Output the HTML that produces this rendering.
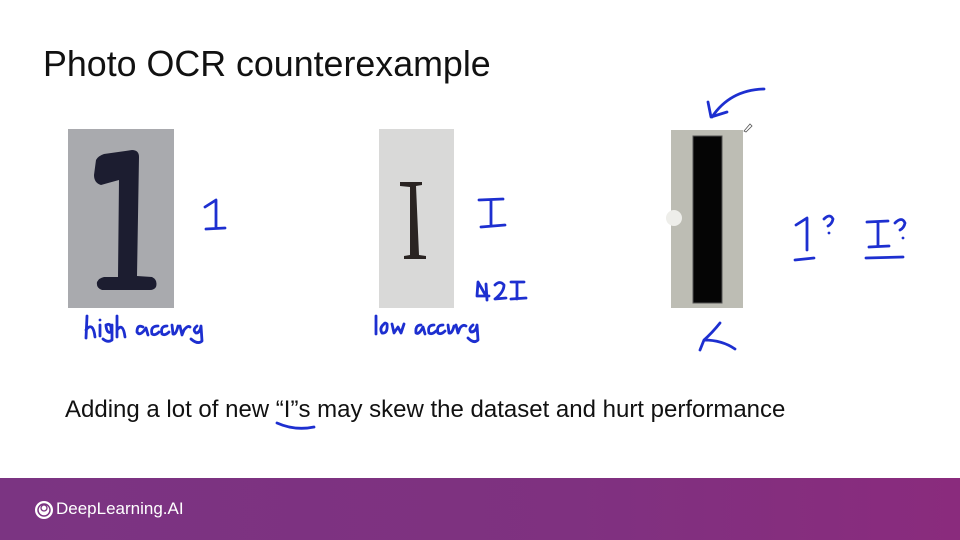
<!DOCTYPE html>
<html><head><meta charset="utf-8"><style>
body{margin:0;width:960px;height:540px;background:#fff;position:relative;overflow:hidden;font-family:"Liberation Sans",sans-serif}
.t{position:absolute;left:43px;top:44px;font-size:35.8px;color:#111}
.s{position:absolute;left:65px;top:396px;font-size:24px;color:#111}
.f{position:absolute;left:0;top:478px;width:960px;height:62px;background:linear-gradient(90deg,#7b3482,#7f3180 60%,#8a2b7d)}
.logo{position:absolute;left:56px;top:499px;color:#fff;font-size:17px}
</style></head><body>
<div class="t">Photo OCR counterexample</div>
<svg width="960" height="540" style="position:absolute;left:0;top:0">
<rect x="68" y="129" width="106" height="179" fill="#a9aaae"/>
<path d="M96 160 Q98 156 104 154 L132 150 Q139 150 139 157 L137 276 L152 277 Q158 280 156 287 Q154 290 150 290 L102 290 Q96 288 97 282 Q99 278 104 277 L118 277 L119 180 Q108 183 101 185 Q94 183 94 175Z" fill="#1c1d30"/>
<rect x="379" y="129" width="75" height="179" fill="#d9d9d8"/>
<path d="M400 182 L422 182 L422 185 L416 186 L419 255 L426 256 L426 259 L404 259 L404 256 L410 255 L410 187 L400 186Z" fill="#2a2422"/>
<rect x="671" y="130" width="72" height="178" fill="#bdbdb4"/>
<rect x="693" y="136" width="29" height="167" fill="#050505" stroke="#555" stroke-width="1"/>
<g fill="none" stroke="#1d2fd0" stroke-width="2.8" stroke-linecap="round" stroke-linejoin="round">
<path d="M205 207 L216 200 L216 228 M206 229 L225 228"/>
<path d="M479 200 L503 199 M491 200 L491 226 M481 227 L505 225"/>
<path d="M486 296 L478 282 L477 296 L489 296 M486 284 L487 300 M495 285 Q500 280 504 285 Q504 292 495 299 L506 298 M511 282 L524 282 M517 282 L517 299 M511 299 L526 298"/>
<path d="M87 316 L86 338 M86 330 Q93 321 95 337 M100 325 L100 336 M100 320 L100 320 M106 325 Q112 322 111 332 Q107 334 106 326 M112 325 L112 340 Q108 343 103 339 M117 316 L117 337 M117 330 Q123 322 125 337 M143 327 Q137 324 137 332 Q140 337 146 328 L148 335 M158 326 Q150 326 152 334 Q155 336 159 332 M167 326 Q160 326 162 334 Q165 336 169 332 M172 325 L173 334 Q176 335 178 326 M180 326 L182 335 L184 330 Q188 325 190 327 M197 326 Q192 330 196 333 Q200 333 201 326 L202 341 Q198 345 191 339"/>
<path d="M376 316 L376 334 M384 324 Q379 328 382 333 Q388 334 387 324 Q385 322 384 324 M392 324 L394 333 L398 327 L401 333 L404 324 M421 325 Q415 325 416 333 Q419 335 423 327 L425 334 M434 325 Q427 325 429 333 Q432 335 436 331 M443 325 Q436 325 438 333 Q441 335 445 331 M448 325 L449 333 Q452 334 454 326 M456 325 L458 333 L460 328 Q463 324 466 326 M473 325 Q468 329 471 332 Q476 332 477 325 L478 340 Q474 344 468 338"/>
<path d="M764 89 Q730 90 712 117 M708 102 L711 117 L727 112"/>
<path d="M735 349 Q722 340 704 340 Q712 333 720 323 M704 340 L700 350"/>
<path d="M796 225 L807 218 L807 250 M795 260 L814 258 M824 219 Q830 213 833 219 Q832 224 828 226 M829 233 L829 233"/>
<path d="M867 222 L888 221 M878 222 L878 246 M869 247 L889 246 M866 258 L903 257 M895 223 Q902 216 905 223 Q904 228 900 230 M903 238 L903 238"/>
<path d="M277 423 Q295 431 314 427"/>
</g>
<circle cx="674" cy="218" r="8" fill="#eeeeea"/>
<path d="M744 131 L750 124 L752 126 L746 132Z" fill="#fff" stroke="#555" stroke-width="0.8"/>
</svg>
<div class="s">Adding a lot of new “I”s may skew the dataset and hurt performance</div>
<div class="f"></div>
<svg width="20" height="20" style="position:absolute;left:34px;top:500px" viewBox="0 0 20 20"><circle cx="10" cy="10" r="9" fill="#fff"/><circle cx="10" cy="10" r="6" fill="none" stroke="#7b3482" stroke-width="1.5"/><circle cx="10" cy="8" r="3" fill="none" stroke="#7b3482" stroke-width="1.3"/></svg>
<div class="logo">DeepLearning.AI</div>
</body></html>
